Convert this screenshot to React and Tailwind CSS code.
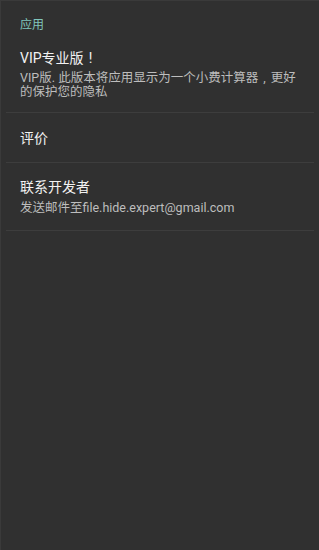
import React from 'react';

const font = { fontFamily: 'Roboto, "Noto Sans CJK SC", sans-serif' };

const Divider = () => <div className="mx-[5px] h-px bg-[#3d3d3d]" />;

export default function App() {
  return (
    <div
      className="w-[319px] h-[550px] bg-[#303030] border-t border-l border-[#3a3a3a] overflow-hidden"
      style={font}
    >
      {/* Section header */}
      <div className="px-[19px] pt-[16px] text-[12px] leading-4 text-[#80c6bc]">应用</div>

      {/* VIP */}
      <div className="px-[19px] pt-[15px] pb-[13px]">
        <div className="text-[14px] leading-5 text-[#f2f2f2]">
          VIP专业版
          <span className="inline-block w-[14px] text-center">!</span>
        </div>
        <div className="mt-[3px] text-[12.5px] leading-[14px] text-[#bdbdbd]">
          VIP版. 此版本将应用显示为一个小费计算器<span className="inline-block w-[12.5px] text-center">,</span>更好的保护您的隐私
        </div>
      </div>
      <Divider />

      {/* Rate */}
      <div className="px-[19px] pt-[15px] pb-[14px]">
        <div className="text-[14px] leading-5 text-[#f2f2f2]">评价</div>
      </div>
      <Divider />

      {/* Contact */}
      <div className="px-[19px] pt-[14px] pb-[15px]">
        <div className="text-[14px] leading-5 text-[#f2f2f2]">联系开发者</div>
        <div className="mt-[4px] text-[12.5px] leading-[14px] text-[#bdbdbd]">
          发送邮件至file.hide.expert@gmail.com
        </div>
      </div>
      <Divider />
    </div>
  );
}
